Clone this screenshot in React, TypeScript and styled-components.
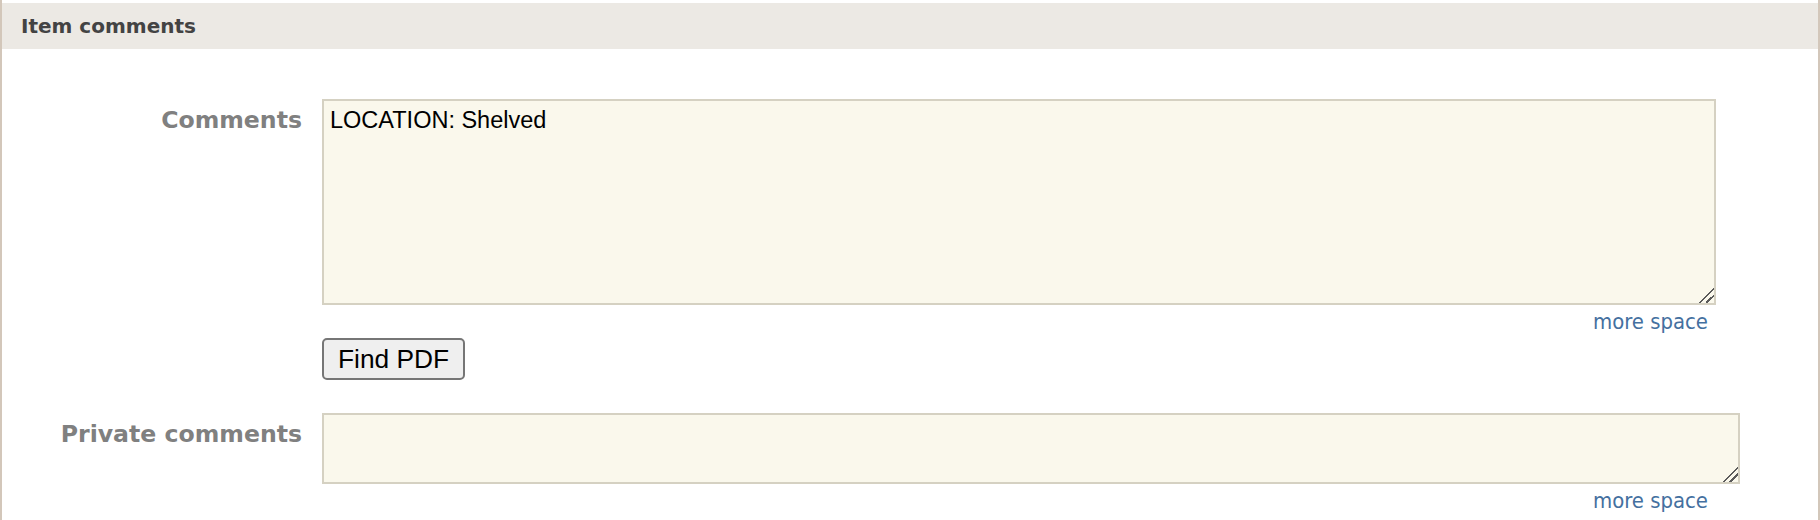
import React from 'react';
import styled, { createGlobalStyle } from 'styled-components';

const GlobalStyle = createGlobalStyle`
  html, body {
    margin: 0;
    padding: 0;
    background: #ffffff;
  }
`;

const Panel = styled.section`
  box-sizing: border-box;
  min-height: 100vh;
  padding-top: 3px;
  border-left: 2px solid #d3c7ba;
  border-right: 2px solid #d3c7ba;
  background: #ffffff;
`;

const PanelHeader = styled.h2`
  margin: 0;
  height: 46px;
  line-height: 46px;
  padding-left: 19px;
  background: #ece9e4;
  color: #434343;
  font-family: 'DejaVu Sans', Verdana, sans-serif;
  font-size: 20px;
  font-weight: bold;
`;

const FormBody = styled.div`
  padding-top: 50px;
  display: flex;
  flex-direction: column;
  gap: 33px;
`;

const Row = styled.div`
  display: grid;
  grid-template-columns: 300px 1fr;
  column-gap: 20px;
  align-items: start;
`;

const Label = styled.label`
  display: block;
  padding-top: 7px;
  text-align: right;
  color: #808080;
  font-family: 'DejaVu Sans', Verdana, sans-serif;
  font-size: 23.6px;
  font-weight: bold;
`;

const Field = styled.div`
  display: flex;
  flex-direction: column;
  align-items: flex-start;
`;

const TextArea = styled.textarea<{ $width: number; $height: number }>`
  display: block;
  box-sizing: border-box;
  width: ${p => p.$width}px;
  height: ${p => p.$height}px;
  margin: 0;
  padding: 6px 6px;
  border: 2px solid #d5d1c2;
  border-radius: 0;
  background: #faf8ec;
  color: #000000;
  font-family: 'Liberation Sans', Arial, sans-serif;
  font-size: 23.5px;
  outline: none;
  resize: both;

  &::-webkit-resizer {
    background: linear-gradient(
      135deg,
      transparent 0 48%,
      #5a5a5a 48% 56%,
      transparent 56% 70%,
      #5a5a5a 70% 78%,
      transparent 78%
    );
  }
`;

const MoreSpace = styled.div`
  width: 1386px;
  margin-top: 4px;
  text-align: right;
  font-family: 'DejaVu Sans Condensed', 'DejaVu Sans', Verdana, sans-serif;
  font-size: 21.9px;
`;

const MoreLink = styled.a`
  color: #44709f;
  text-decoration: none;
`;

const Button = styled.button`
  box-sizing: border-box;
  appearance: none;
  height: 42px;
  margin-top: 4px;
  padding: 0 14px;
  border: 2px solid #767676;
  border-radius: 5px;
  background: #efefef;
  color: #000000;
  font-family: 'Liberation Sans', Arial, sans-serif;
  font-size: 26.3px;
  cursor: pointer;
`;

export default function App() {
  return (
    <>
      <GlobalStyle />
      <Panel>
        <PanelHeader>Item comments</PanelHeader>
        <FormBody>
          <Row>
            <Label htmlFor="comments">Comments</Label>
            <Field>
              <TextArea id="comments" $width={1394} $height={206} defaultValue="LOCATION: Shelved" />
              <MoreSpace>
                <MoreLink href="#">more space</MoreLink>
              </MoreSpace>
              <Button type="button">Find PDF</Button>
            </Field>
          </Row>
          <Row>
            <Label htmlFor="private-comments">Private comments</Label>
            <Field>
              <TextArea id="private-comments" $width={1418} $height={71} defaultValue="" />
              <MoreSpace>
                <MoreLink href="#">more space</MoreLink>
              </MoreSpace>
            </Field>
          </Row>
        </FormBody>
      </Panel>
    </>
  );
}
